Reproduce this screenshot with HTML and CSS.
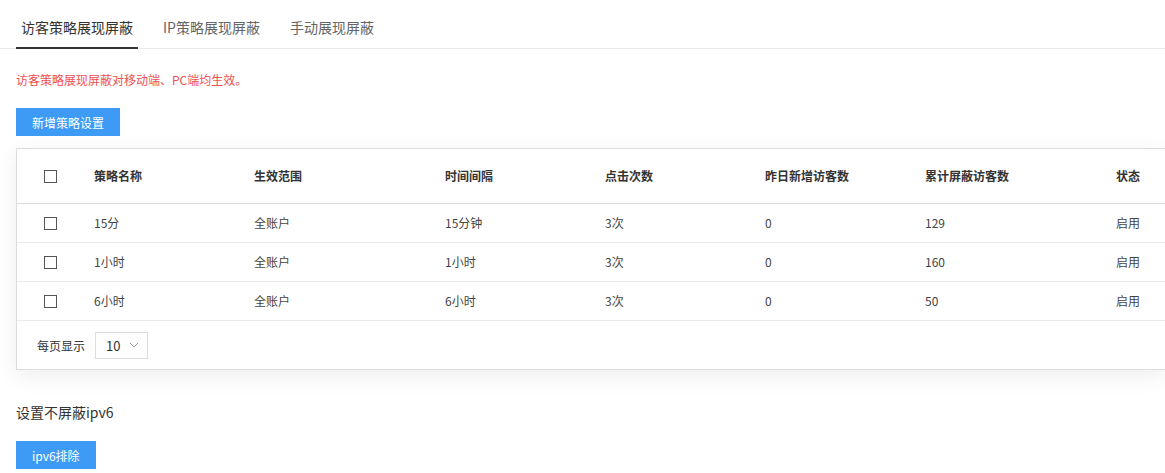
FILE: index.html
```html
<!DOCTYPE html>
<html lang="zh-CN">
<head>
    <meta charset="UTF-8">
    <title>展现屏蔽</title>
    <link rel="stylesheet" href="styles.css">
</head>
<body>
    <div class="tabs">
        <div class="tab active">访客策略展现屏蔽</div>
        <div class="tab">IP策略展现屏蔽</div>
        <div class="tab">手动展现屏蔽</div>
    </div>

    <p class="notice">访客策略展现屏蔽对移动端、PC端均生效。</p>
    <button class="btn">新增策略设置</button>

    <div class="table-box">
        <table>
            <colgroup>
                <col class="col-chk">
                <col class="col-md">
                <col class="col-lg">
                <col class="col-md">
                <col class="col-md">
                <col class="col-md">
                <col class="col-lg">
                <col>
            </colgroup>
            <thead>
                <tr>
                    <th class="chk-cell"><span class="chk"></span></th>
                    <th>策略名称</th>
                    <th>生效范围</th>
                    <th>时间间隔</th>
                    <th>点击次数</th>
                    <th>昨日新增访客数</th>
                    <th>累计屏蔽访客数</th>
                    <th>状态</th>
                </tr>
            </thead>
            <tbody>
                <tr>
                    <td class="chk-cell"><span class="chk"></span></td>
                    <td>15分</td>
                    <td>全账户</td>
                    <td>15分钟</td>
                    <td>3次</td>
                    <td>0</td>
                    <td>129</td>
                    <td>启用</td>
                </tr>
                <tr>
                    <td class="chk-cell"><span class="chk"></span></td>
                    <td>1小时</td>
                    <td>全账户</td>
                    <td>1小时</td>
                    <td>3次</td>
                    <td>0</td>
                    <td>160</td>
                    <td>启用</td>
                </tr>
                <tr>
                    <td class="chk-cell"><span class="chk"></span></td>
                    <td>6小时</td>
                    <td>全账户</td>
                    <td>6小时</td>
                    <td>3次</td>
                    <td>0</td>
                    <td>50</td>
                    <td>启用</td>
                </tr>
            </tbody>
        </table>
        <div class="pager">
            <span>每页显示</span>
            <div class="select">
                <span>10</span>
                <svg width="10" height="6" viewBox="0 0 10 6"><path d="M1 1l4 4 4-4" fill="none" stroke="#999" stroke-width="1"/></svg>
            </div>
        </div>
    </div>

    <h3 class="section-title">设置不屏蔽ipv6</h3>
    <button class="btn">ipv6排除</button>
</body>
</html>
```

FILE: styles.css
```css
html, body {
    margin: 0;
}
body {
    font-family: "Noto Sans CJK SC", "Open Sans", sans-serif;
    color: #333;
    background-color: #fff;
}
.tabs {
    display: flex;
    gap: 20px;
    padding-left: 16px;
    border-bottom: 1px solid #ebebeb;
}
.tab {
    padding: 17px 5px 10px;
    font-size: 14px;
    line-height: 20px;
    color: #666;
    border-bottom: 2px solid transparent;
    margin-bottom: -1px;
}
.tab.active {
    color: #333;
    border-bottom-color: #333;
}
.notice {
    margin: 22px 0 0 16px;
    font-size: 12px;
    line-height: 18px;
    color: #f0504f;
}
.btn {
    display: block;
    margin-left: 16px;
    height: 28px;
    padding: 0 16px;
    border: none;
    background-color: #3d9bf6;
    color: #fff;
    font-family: inherit;
    font-size: 12px;
    cursor: pointer;
}
.notice + .btn {
    margin-top: 19px;
}
.table-box {
    margin: 12px 0 0 16px;
    border: 1px solid #dcdcdc;
    border-right: none;
    box-shadow: 0 6px 22px rgba(0, 0, 0, 0.07);
    background-color: #fff;
}
table {
    border-collapse: collapse;
    table-layout: fixed;
    width: 100%;
    font-size: 12px;
}
.col-chk {
    width: 77px;
}
.col-md {
    width: 160px;
}
.col-lg {
    width: 191px;
}
th, td {
    text-align: left;
    padding: 0;
    line-height: 18px;
    vertical-align: middle;
}
th {
    height: 54px;
    font-weight: bold;
    color: #333;
    border-bottom: 1px solid #dcdcdc;
}
td {
    height: 38px;
    color: #444;
    border-bottom: 1px solid #ebebeb;
}
.chk-cell {
    padding-left: 27px;
}
.chk {
    display: block;
    width: 11px;
    height: 11px;
    border: 1px solid #555;
}
.pager {
    display: flex;
    align-items: center;
    gap: 10px;
    height: 48px;
    padding-left: 20px;
    font-size: 12px;
}
.select {
    display: flex;
    align-items: center;
    gap: 9px;
    box-sizing: border-box;
    width: 53px;
    height: 27px;
    padding-left: 10px;
    border: 1px solid #ddd;
    font-size: 13px;
}
.section-title {
    margin: 32px 0 19px 16px;
    font-size: 14px;
    font-weight: normal;
    line-height: 20px;
}
```
